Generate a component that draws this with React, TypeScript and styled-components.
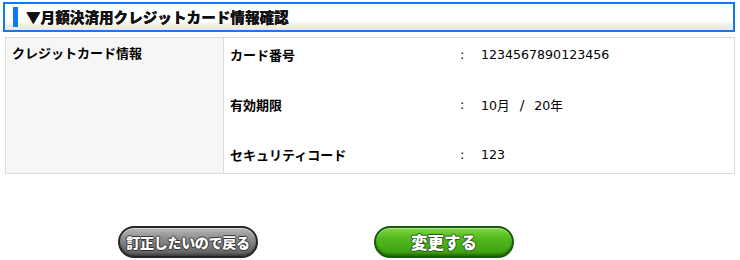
import styled, {createGlobalStyle} from "styled-components";

const Global = createGlobalStyle`
  html, body {
    margin: 0;
    padding: 0;
    background: #fff;
  }
  body {
    font-family: "DejaVu Sans", "Noto Sans CJK JP", sans-serif;
    color: #000;
  }
`;

const Page = styled.div`
  width: 740px;
  padding-top: 2px;
`;

const Heading = styled.div`
  margin: 0 5px 0 3px;
  height: 26px;
  border: 2px solid #0d7bf2;
  background: linear-gradient(to bottom, #fff 0%, #fff 68%, #f0f0f0 78%, #e6e6e6 100%);
  display: flex;
  align-items: center;
  padding-left: 8px;
  gap: 8px;
`;

const Accent = styled.span`
  width: 5px;
  height: 20px;
  background: #0d7bf2;
`;

const HeadingText = styled.h2`
  margin: 0;
  font-family: "Noto Sans CJK JP", sans-serif;
  font-size: 14.6px;
  font-weight: 900;
  line-height: 1;
  color: #111;
  text-shadow: 0 0 0.5px #111;
`;

const Table = styled.div`
  margin: 5px 5px 0 5px;
  border: 1px solid #dcdcd2;
  display: grid;
  grid-template-columns: 218px 1fr;
`;

const HeadCell = styled.div`
  background: #f6f6f6;
  border-right: 1px solid #dcdcd2;
  padding: 6px 6px;
  font-family: "Noto Sans CJK JP", sans-serif;
  font-size: 13px;
  font-weight: 700;
  line-height: 17px;
`;

const BodyCell = styled.div`
  display: grid;
  grid-template-columns: 230px 21px 1fr;
  grid-auto-rows: 33px;
  row-gap: 17px;
  padding: 0 0 2px 6px;
  align-items: center;
`;

const Label = styled.div`
  font-family: "Noto Sans CJK JP", sans-serif;
  font-size: 13px;
  font-weight: 700;
`;

const Colon = styled.div`
  font-size: 13px;
`;

const Value = styled.div`
  font-size: 12.6px;
  display: flex;
  align-items: center;
`;

const Slash = styled.span<{ $space: number }>`
  margin: 0 ${p => p.$space}px;
  font-size: 14px;
`;

const Buttons = styled.div`
  display: flex;
  gap: 116px;
  margin-top: 52px;
  padding-left: 118px;
`;

const Pill = styled.button<{ $tone: "gray" | "green" }>`
  width: 140px;
  height: 32px;
  border-radius: 16px;
  border: 2px solid ${p => (p.$tone === "gray" ? "#262626" : "#145a08")};
  background: ${p =>
    p.$tone === "gray"
      ? "linear-gradient(to bottom, #b8b8b8 0%, #909090 35%, #747474 70%, #5a5a5a 100%)"
      : "linear-gradient(to bottom, #80d640 0%, #54ba20 35%, #45ab16 70%, #38980f 100%)"};
  box-shadow: inset 0 1px 0 rgba(255, 255, 255, 0.45), inset 0 -2px 2px rgba(0, 0, 0, 0.3);
  color: #fff;
  font-family: "Noto Sans CJK JP", sans-serif;
  font-weight: 900;
  font-size: ${p => (p.$tone === "gray" ? 14 : 16.5)}px;
  letter-spacing: ${p => (p.$tone === "gray" ? -0.3 : 0)}px;
  padding: 0;
  text-shadow:
    -1px 0 0 ${p => (p.$tone === "gray" ? "#333" : "#1d5a0f")},
    1px 0 0 ${p => (p.$tone === "gray" ? "#333" : "#1d5a0f")},
    0 -1px 0 ${p => (p.$tone === "gray" ? "#333" : "#1d5a0f")},
    0 1px 0 ${p => (p.$tone === "gray" ? "#333" : "#1d5a0f")};
  cursor: pointer;
`;

const rows = [
  {label: "カード番号", value: <>1234567890123456</>},
  {label: "有効期限", value: <>10月<Slash $space={10}>/</Slash>20年</>},
  {label: "セキュリティコード", value: <>123</>},
];

export default function App() {
  return (
    <Page>
      <Global/>
      <Heading>
        <Accent/>
        <HeadingText>▼月額決済用クレジットカード情報確認</HeadingText>
      </Heading>
      <Table>
        <HeadCell>クレジットカード情報</HeadCell>
        <BodyCell>
          {rows.map(r => (
            <>
              <Label key={r.label}>{r.label}</Label>
              <Colon>:</Colon>
              <Value>{r.value}</Value>
            </>
          ))}
        </BodyCell>
      </Table>
      <Buttons>
        <Pill $tone="gray">訂正したいので戻る</Pill>
        <Pill $tone="green">変更する</Pill>
      </Buttons>
    </Page>
  );
}
